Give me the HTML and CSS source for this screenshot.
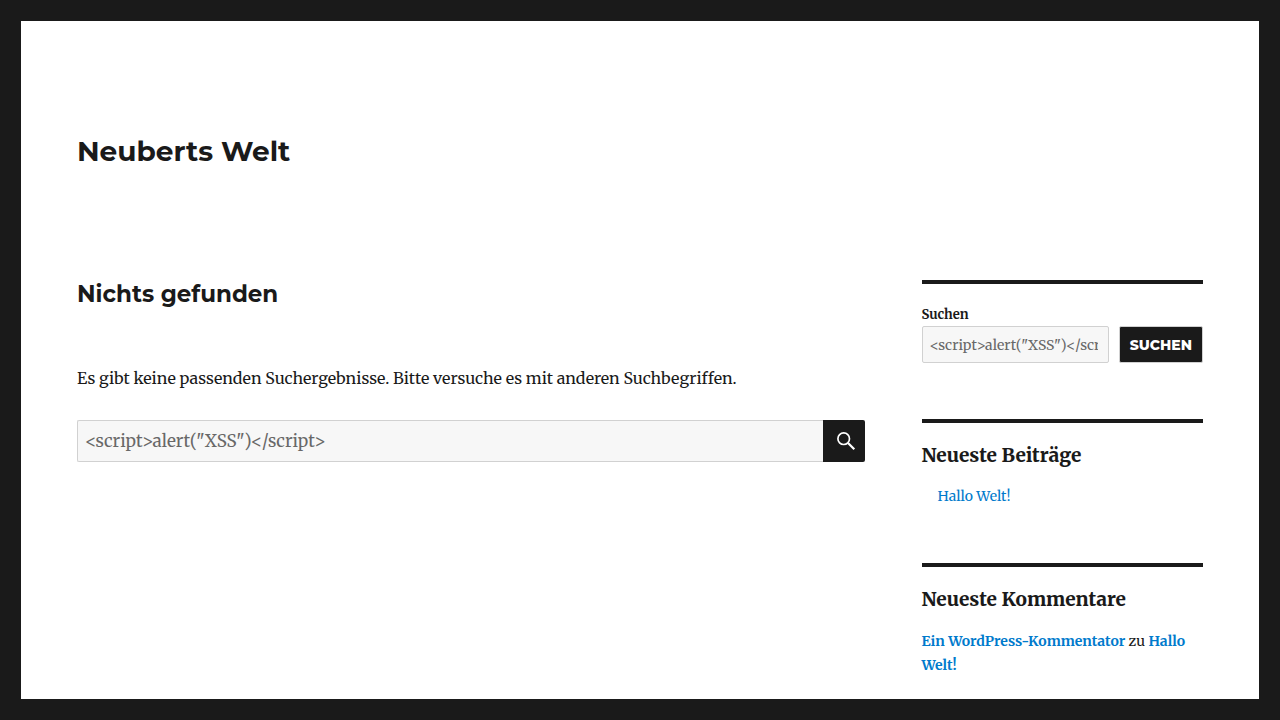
FILE: index.html
```
<!DOCTYPE html>
<html lang="de">
<head>
<meta charset="utf-8">
<meta name="viewport" content="width=device-width, initial-scale=1">
<title>Neuberts Welt</title>
<link rel="stylesheet" href="styles.css">
</head>
<body>
<div class="site">
  <header class="site-header">
    <h1 class="site-title"><a href="#">Neuberts Welt</a></h1>
  </header>
  <div class="site-content">
    <main class="content-area">
      <h2 class="page-title">Nichts gefunden</h2>
      <p class="page-text">Es gibt keine passenden Suchergebnisse. Bitte versuche es mit anderen Suchbegriffen.</p>
      <form class="search-form" role="search">
        <input class="field search-field" type="search" aria-label="Suche nach:" value="&lt;script&gt;alert(&quot;XSS&quot;)&lt;/script&gt;">
        <button class="search-submit" type="submit" aria-label="Suchen">
          <svg class="search-icon" viewBox="0 0 20 20" aria-hidden="true"><circle cx="7.7" cy="7.7" r="5.8"/><path d="M12 12l6.3 6.3" stroke-width="2.2"/></svg>
        </button>
      </form>
    </main>
    <aside class="sidebar">
      <section class="widget">
        <form role="search">
          <label class="widget-label" for="side-search">Suchen</label>
          <div class="widget-search">
            <input class="field widget-field" id="side-search" type="search" value="&lt;script&gt;alert(&quot;XSS&quot;)&lt;/script&gt;">
            <button class="widget-button" type="submit">Suchen</button>
          </div>
        </form>
      </section>
      <section class="widget">
        <h2 class="widget-title">Neueste Beiträge</h2>
        <ul class="post-list"><li><a class="link" href="#">Hallo Welt!</a></li></ul>
      </section>
      <section class="widget">
        <h2 class="widget-title">Neueste Kommentare</h2>
        <p class="comment"><a class="link strong" href="#">Ein WordPress-Kommentator</a> zu <a class="link strong" href="#">Hallo Welt!</a></p>
      </section>
    </aside>
  </div>
</div>
</body>
</html>
```
FILE: styles.css
```
*, *::before, *::after { box-sizing: border-box; }

body {
  margin: 0;
  padding: 21px;
  background: #1a1a1a;
  color: #1a1a1a;
  font-family: Merriweather, "DejaVu Serif Condensed", "DejaVu Serif", serif;
  font-size: 16px;
  line-height: 28px;
}

h1, h2, p, ul { margin: 0; padding: 0; }

.site {
  min-height: calc(100vh - 42px);
  padding: 0 56px;
  background: #fff;
}

.site-header { padding: 112px 0 111px; }

.site-title,
.page-title {
  font-family: Montserrat, Inter, sans-serif;
  font-weight: 700;
}

.site-title { font-size: 28px; line-height: 36px; }
.site-title a { color: inherit; text-decoration: none; }

.site-content {
  display: grid;
  grid-template-columns: minmax(0, 1fr) 25%;
  column-gap: 5%;
}

.page-title { margin-bottom: 56px; font-size: 23px; line-height: 28px; }
.page-text { margin-bottom: 28px; }

.search-form { display: flex; }

.field {
  min-width: 0;
  flex: 1;
  margin: 0;
  border: 1px solid #d1d1d1;
  border-radius: 2px;
  background: #f7f7f7;
  color: #686868;
  font-family: inherit;
  appearance: none;
}

.field::-webkit-search-cancel-button { display: none; }

.search-field {
  height: 42px;
  padding: 0 7px;
  border-right: 0;
  border-radius: 2px 0 0 2px;
  font-size: 17px;
}

.search-submit {
  display: grid;
  place-items: center;
  width: 42px;
  height: 42px;
  padding: 0 0 0 3px;
  border: 0;
  border-radius: 0 2px 2px 0;
  background: #1a1a1a;
}

.search-icon {
  width: 20px;
  height: 20px;
  fill: none;
  stroke: #fff;
  stroke-width: 1.7;
}

.widget {
  margin-bottom: 56px;
  padding-top: 20px;
  border-top: 4px solid #1a1a1a;
  font-size: 14px;
  line-height: 24px;
}

.widget:last-child { margin-bottom: 0; padding-bottom: 20px; }
.widget-label { display: block; font-size: 13px; line-height: 22px; font-weight: 700; }
.widget-search { display: flex; gap: 10px; }
.widget-field { height: 37px; padding: 0 10px 0 7px; font-size: 14px; }

.widget-button {
  height: 37px;
  padding: 0 10px;
  border: 1px solid #d1d1d1;
  border-radius: 2px;
  background: #1a1a1a;
  color: #fff;
  font: 800 14px/20px Montserrat, Inter, sans-serif;
  text-transform: uppercase;
}

.widget-title { margin-bottom: 18px; font-size: 19px; line-height: 24px; font-weight: 800; }
.post-list { padding-left: 16px; line-height: 22px; list-style: none; }
.link { color: #007acc; text-decoration: none; }
.strong { font-weight: 700; }
```
